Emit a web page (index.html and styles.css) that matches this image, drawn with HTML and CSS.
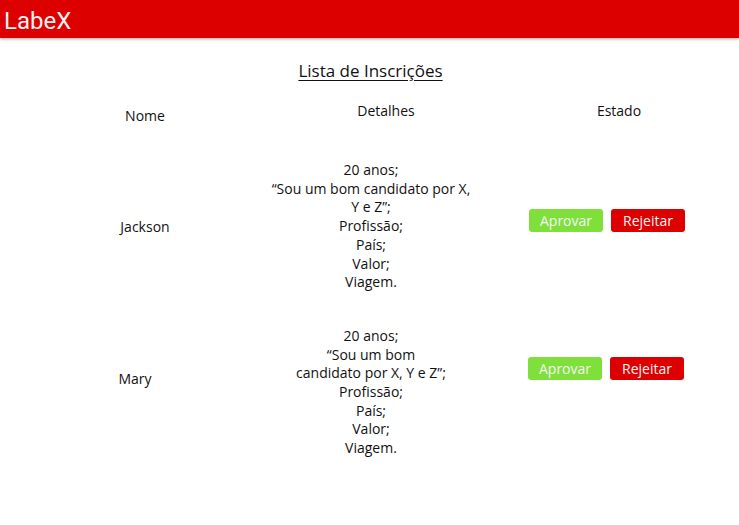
FILE: index.html
```html
<!DOCTYPE html>
<html lang="pt">
<head>
<meta charset="utf-8">
<title>LabeX</title>
<link rel="stylesheet" href="styles.css">
</head>
<body>
<header class="topbar"><span class="brand">LabeX</span></header>
<main class="content">
  <h1 class="title">Lista de Inscrições</h1>
  <div class="grid">
    <div class="cell head head-nome">Nome</div>
    <div class="cell head">Detalhes</div>
    <div class="cell head head-estado">Estado</div>

    <div class="cell name">Jackson</div>
    <div class="cell details">20 anos;<br>“Sou um bom candidato por X,<br>Y e Z”;<br>Profissão;<br>País;<br>Valor;<br>Viagem.</div>
    <div class="cell actions"><button class="btn btn-ok">Aprovar</button><button class="btn btn-no">Rejeitar</button></div>

    <div class="cell name name-up">Mary</div>
    <div class="cell details">20 anos;<br>“Sou um bom<br>candidato por X, Y e Z”;<br>Profissão;<br>País;<br>Valor;<br>Viagem.</div>
    <div class="cell actions actions-up"><button class="btn btn-ok">Aprovar</button><button class="btn btn-no">Rejeitar</button></div>
  </div>
</main>
</body>
</html>
```
FILE: styles.css
```css
* { box-sizing: border-box; }
body {
  margin: 0;
  background: #ffffff;
  font-family: "Open Sans", "Noto Sans", sans-serif;
  color: #111;
}
.topbar {
  height: 38px;
  background: #dd0000;
  box-shadow: 0 1px 3px rgba(0,0,0,0.35);
  display: flex;
  align-items: center;
  padding-left: 4px;
  padding-top: 3px;
}
.brand {
  font-family: Roboto, sans-serif;
  font-size: 24px;
  color: #f2f2f2;
  line-height: 1;
}
.content {
  padding-top: 22px;
}
.title {
  margin: 0;
  text-align: center;
  font-size: 17px;
  font-weight: 400;
  text-decoration: underline;
  text-underline-offset: 3px;
  line-height: 22px;
  padding-left: 2px;
}
.grid {
  display: grid;
  grid-template-columns: 240px 242px 200px;
  padding-left: 25px;
  margin-top: 20px;
  align-items: center;
}
.cell {
  text-align: center;
  font-size: 14px;
}
.head {
  line-height: 18px;
  padding-bottom: 41px;
}
.head-nome { padding-top: 5px; padding-bottom: 36px; }
.head-estado { padding-left: 24px; }
.details {
  line-height: 18.7px;
  padding-bottom: 35px;
  padding-right: 30px;
}
.name { padding-bottom: 35px; }
.name-up { padding-bottom: 63px; padding-right: 20px; }
.actions {
  display: flex;
  justify-content: center;
  gap: 8px;
  padding-bottom: 47px;
}
.actions-up { padding-bottom: 83px; padding-right: 2px; }
.btn {
  font-family: "Open Sans", sans-serif;
  font-size: 14px;
  color: #f4f4f4;
  border: none;
  border-radius: 3px;
  height: 23px;
  width: 74px;
  padding: 0;
  line-height: 23px;
}
.btn-ok { background: #7fe03b; }
.btn-no { background: #dd0000; }
```
